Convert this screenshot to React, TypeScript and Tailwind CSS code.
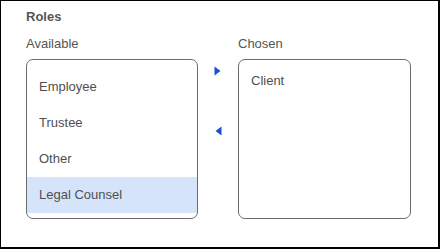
const available = ["Employee", "Trustee", "Other", "Legal Counsel"];
const chosen = ["Client"];

function Arrow({ dir }: { dir: "right" | "left" }) {
  return (
    <svg width="7" height="10" viewBox="0 0 7 10" className="block">
      {dir === "right" ? (
        <path d="M0.5 0.5 L6.5 5 L0.5 9.5 Z" fill="#1d4ed8" />
      ) : (
        <path d="M6.5 0.5 L0.5 5 L6.5 9.5 Z" fill="#1d4ed8" />
      )}
    </svg>
  );
}

export default function App() {
  return (
    <div
      className="w-[440px] h-[249px] bg-white border-t border-l border-r-2 border-b-2 border-black pl-[25px] pt-[8px] text-[13px] text-[#4f4f4f]"
      style={{ fontFamily: '"Liberation Sans", Arial, sans-serif' }}
    >
      <div className="font-bold leading-4 text-[#555]">Roles</div>
      <div className="flex mt-[11px]">
        <div className="flex flex-col">
          <div className="leading-4 text-[#555]">Available</div>
          <div className="mt-[7px] w-[172px] h-[160px] border border-[#6b6b6b] rounded-[7px] overflow-hidden pt-[9px]">
            {available.map((item) => (
              <div
                key={item}
                className={`h-9 flex items-center px-3 ${
                  item === "Legal Counsel" ? "bg-[#d5e4fa]" : ""
                }`}
              >
                {item}
              </div>
            ))}
          </div>
        </div>
        <div className="flex flex-col pt-[30px] pl-[16px] w-[40px] gap-[50px]">
          <Arrow dir="right" />
          <div className="pl-[1px]">
            <Arrow dir="left" />
          </div>
        </div>
        <div className="flex flex-col">
          <div className="leading-4 text-[#555]">Chosen</div>
          <div className="mt-[7px] w-[173px] h-[160px] border border-[#6b6b6b] rounded-[7px] overflow-hidden pt-[3px]">
            {chosen.map((item) => (
              <div key={item} className="h-9 flex items-center px-3">
                {item}
              </div>
            ))}
          </div>
        </div>
      </div>
    </div>
  );
}
